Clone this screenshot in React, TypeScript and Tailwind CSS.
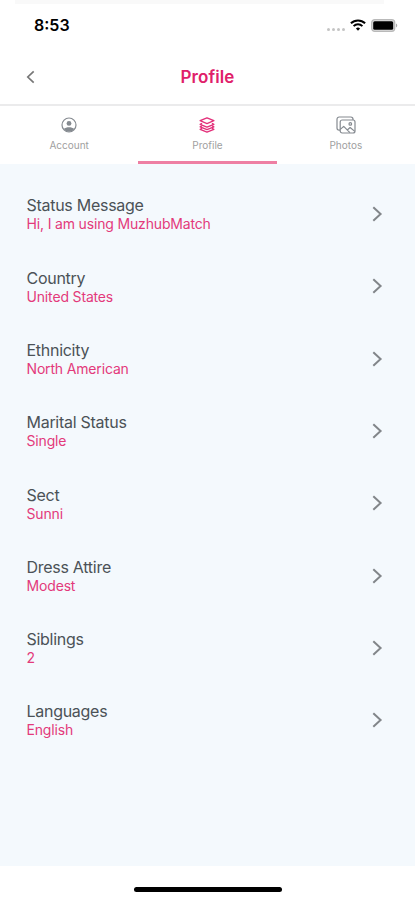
import { useState } from "react";

const TABS = ["Account", "Profile", "Photos"];

const FIELDS = [
    { label: "Status Message", value: "Hi, I am using MuzhubMatch" },
    { label: "Country", value: "United States" },
    { label: "Ethnicity", value: "North American" },
    { label: "Marital Status", value: "Single" },
    { label: "Sect", value: "Sunni" },
    { label: "Dress Attire", value: "Modest" },
    { label: "Siblings", value: "2" },
    { label: "Languages", value: "English" },
];

function TabIcon({ name }: { name: string }) {
    if (name === "Account") {
        return (
            <svg width="16" height="16" viewBox="0 0 16 16" fill="none">
                <circle cx="8" cy="8" r="7" stroke="currentColor" strokeWidth="1.2" />
                <circle cx="8" cy="6.4" r="2.4" fill="currentColor" />
                <path d="M2.6 12C4 10.700 6 10.200 8 10.200s4 .5 5.400 1.800A6.800 6.800 0 0 1 8 14.800 6.800 6.800 0 0 1 2.600 12Z" fill="currentColor" />
            </svg>
        );
    }
    if (name === "Profile") {
        return (
            <svg width="16" height="16" viewBox="0 0 16 16" fill="none" stroke="currentColor" strokeWidth="1.300" strokeLinejoin="round" strokeLinecap="round">
                <path d="M8 .8 14.900 3.700 8 6.600 1.100 3.700Z" />
                <path d="M2.600 6.500 1.100 7.300 8 10.200l6.900-2.900-1.500-.8" />
                <path d="M2.600 9 1.100 9.800 8 12.700l6.900-2.900-1.500-.8" />
                <path d="M2.600 11.500l-1.500.8L8 15.200l6.900-2.900-1.500-.8" />
            </svg>
        );
    }
    return (
        <svg width="20" height="18" viewBox="0 0 20 18" fill="none" stroke="currentColor" strokeWidth="1.200" strokeLinejoin="round">
            <path d="M4 14.200H3.200A2.200 2.200 0 0 1 1 12V3.200A2.200 2.200 0 0 1 3.200 1h11.600A2.200 2.200 0 0 1 17 3.200V4" />
            <rect x="4.200" y="4" width="14.800" height="13" rx="2" />
            <circle cx="14.300" cy="7.900" r="1.300" />
            <path d="m4.300 13.400 3.400-3 6.200 6.300M11.300 14l2.800-2.500 4.700 3.900" />
        </svg>
    );
}

function StatusBar() {
    return (
        <div className="flex h-[50px] shrink-0 flex-col">
            <div className="mr-[31px] ml-[15px] h-1 bg-[#f9f9f9]" />
            <div className="flex h-[42px] items-center justify-between pr-[17px] pl-[34px]">
                <span className="text-[16px] font-semibold text-black">8:53</span>
                <div className="flex items-center">
                    <div className="mt-2 mr-[5px] flex gap-[2px]">
                        {[0, 1, 2, 3].map((i) => (
                            <span key={i} className="size-[3px] rounded-full bg-[#c4c4c4]" />
                        ))}
                    </div>
                    <svg width="16" height="12" viewBox="0 0 16 12" fill="none" stroke="#000" strokeWidth="2">
                        <path d="M.9 4.300a10.200 10.200 0 0 1 14.200 0" />
                        <path d="M3.600 7.100a6.300 6.300 0 0 1 8.800 0" />
                        <path d="M8 11.700 5.900 9.600a3 3 0 0 1 4.200 0Z" fill="#000" stroke="none" />
                    </svg>
                    <svg className="ml-[5px]" width="27" height="13" viewBox="0 0 27 13">
                        <rect x=".7" y=".7" width="23" height="11.600" rx="3" fill="#ddd" stroke="#b9b9b9" strokeWidth="1.300" />
                        <rect x="2.200" y="2.200" width="20" height="8.600" rx="1.500" fill="#000" />
                        <path d="M25 4.600c1.700.6 1.700 3.200 0 3.800Z" fill="#aaa" />
                    </svg>
                </div>
            </div>
        </div>
    );
}

export default function App() {
    const [active, setActive] = useState("Profile");

    return (
        <div className="flex h-[900px] w-full flex-col overflow-hidden bg-white font-['Inter',sans-serif]">
            <StatusBar />

            <header className="grid h-[54px] shrink-0 grid-cols-3 items-center px-[26px]">
                <button aria-label="Back" className="text-[#777]">
                    <svg width="9" height="14" viewBox="0 0 9 14" fill="none" stroke="currentColor" strokeWidth="1.700">
                        <path d="M7.700 1.300 1.800 7l5.900 5.700" />
                    </svg>
                </button>
                <h1 className="pt-[2px] text-center text-[17px] font-semibold tracking-[0.1px] text-[#e0206a]">Profile</h1>
            </header>

            <nav className="grid h-[60px] shrink-0 grid-cols-3 border-t-2 border-[#ebebec]">
                {TABS.map((tab) => (
                    <button
                        key={tab}
                        onClick={() => setActive(tab)}
                        className={`flex flex-col items-center border-b-[3px] pt-[9px] ${active === tab ? "border-[#ee7fa3]" : "border-transparent"}`}
                    >
                        <span className={`flex h-[19px] items-center ${active === tab ? "text-[#e3307a]" : "text-[#858a90]"}`}>
                            <TabIcon name={tab} />
                        </span>
                        <span className="mt-[4px] text-[10px] leading-[14px] text-[#a0a0a0]">{tab}</span>
                    </button>
                ))}
            </nav>

            <main className="flex-1 bg-[#f4f9fd] pt-[14px]">
                {FIELDS.map((field) => (
                    <button key={field.label} className="flex h-[72.300px] w-full items-center justify-between pr-[32px] pl-[26.500px] text-left">
                        <div className="flex flex-col pt-[1.500px]">
                            <span className="text-[16px] leading-[19px] tracking-[-0.280px] text-[#4b5257]">{field.label}</span>
                            <span className="text-[14px] leading-[18px] tracking-[-0.160px] text-[#e33a7b]">{field.value}</span>
                        </div>
                        <svg width="11" height="16" viewBox="0 0 11 16" fill="none" stroke="#82868a" strokeWidth="2">
                            <path d="M1.300 1.200 8.600 8l-7.300 6.800" />
                        </svg>
                    </button>
                ))}
            </main>

            <footer className="flex h-[34px] shrink-0 justify-center pt-[21px]">
                <div className="h-[5px] w-[148px] rounded-full bg-black" />
            </footer>
        </div>
    );
}
